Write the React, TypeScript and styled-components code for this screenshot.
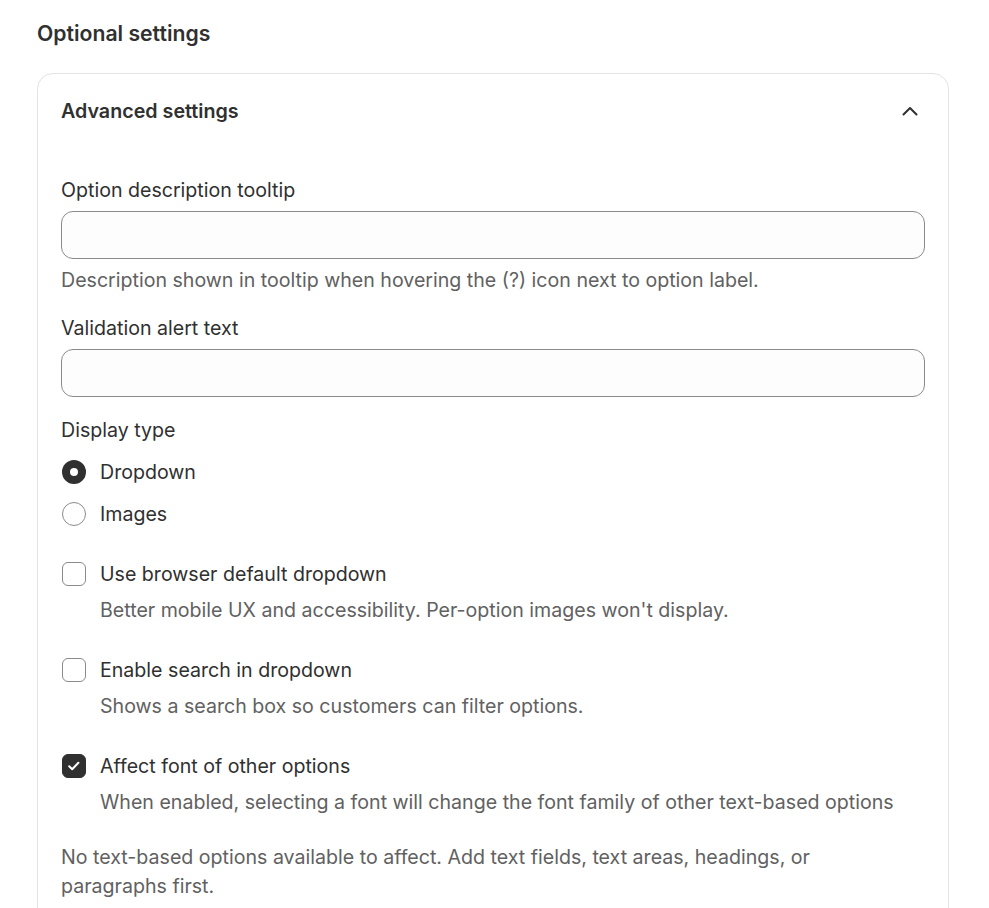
import React from "react";
import styled, { createGlobalStyle } from "styled-components";

const Global = createGlobalStyle`
  * { box-sizing: border-box; }
  html, body { margin: 0; padding: 0; background: #ffffff; }
  body {
    font-family: Inter, "Noto Sans", "Liberation Sans", sans-serif;
    color: #303030;
    -webkit-font-smoothing: antialiased;
  }
`;

const Page = styled.div`
  padding: 19px 40px 0 37px;
`;

const PageTitle = styled.h2`
  margin: 0 0 26px;
  font-size: 21.2px;
  line-height: 28px;
  font-weight: 600;
  color: #303030;
`;

const Card = styled.section`
  border: 1px solid #e3e3e3;
  border-radius: 16px;
  padding: 23px 23px 40px;
  background: #fff;
`;

const CardHeader = styled.div`
  display: flex;
  align-items: center;
  justify-content: space-between;
  height: 28px;
  margin-bottom: 51px;
`;

const CardTitle = styled.h3`
  margin: 0;
  font-size: 19.7px;
  line-height: 28px;
  font-weight: 600;
`;

const ToggleButton = styled.button`
  display: flex;
  align-items: center;
  justify-content: center;
  width: 28px;
  height: 28px;
  margin-right: 1px;
  padding: 0;
  border: 0;
  background: transparent;
  color: #303030;
  cursor: pointer;
`;

const Field = styled.div<{ $gap?: number }>`
  display: flex;
  flex-direction: column;
  gap: 7px;
  margin-bottom: ${(p) => p.$gap ?? 20}px;
`;

const Label = styled.label`
  font-size: 19.6px;
  line-height: 28px;
  color: #303030;
`;

const Input = styled.input`
  display: block;
  width: 100%;
  height: 48px;
  margin: 0;
  padding: 0 14px;
  border: 1px solid #8a8a8a;
  border-radius: 12px;
  background: #fdfdfd;
  font: inherit;
  font-size: 19.6px;
  outline: none;
`;

const Help = styled.div<{ $indent?: boolean }>`
  font-size: 19.6px;
  line-height: 28px;
  color: #616161;
  padding-left: ${(p) => (p.$indent ? 39 : 0)}px;
`;

const ChoiceList = styled.div`
  display: flex;
  flex-direction: column;
  gap: 14px;
  margin-top: 14px;
`;

const Choice = styled.label`
  display: flex;
  align-items: center;
  gap: 14px;
  font-size: 19.6px;
  line-height: 28px;
  color: #303030;
  cursor: pointer;
`;

const RadioDot = styled.span<{ $on?: boolean }>`
  flex: none;
  width: 24px;
  height: 24px;
  margin-left: 1px;
  border-radius: 50%;
  background: #fff;
  border: ${(p) => (p.$on ? "8px solid #303030" : "1px solid #8a8a8a")};
`;

const Box = styled.span<{ $on?: boolean }>`
  flex: none;
  display: flex;
  align-items: center;
  justify-content: center;
  width: 24px;
  height: 24px;
  margin-left: 1px;
  border-radius: 6px;
  background: ${(p) => (p.$on ? "#303030" : "#fff")};
  border: 1px solid ${(p) => (p.$on ? "#303030" : "#8a8a8a")};
`;

const CheckGroup = styled.div`
  display: flex;
  flex-direction: column;
  gap: 8px;
  margin-top: 32px;
`;

const Note = styled.p`
  margin: 27px 0 0;
  max-width: 840px;
  font-size: 19.6px;
  line-height: 29px;
  color: #616161;
`;

const ChevronUp = () => (
  <svg width="16" height="10" viewBox="0 0 16 10" fill="none">
    <path d="M1.5 8.5L8 2l6.5 6.5" stroke="currentColor" strokeWidth="2" strokeLinecap="round" strokeLinejoin="round" />
  </svg>
);

const Tick = () => (
  <svg width="16" height="16" viewBox="0 0 16 16" fill="none">
    <path d="M3.2 8.3l3 3 6.2-6.6" stroke="#fff" strokeWidth="2" strokeLinecap="round" strokeLinejoin="round" />
  </svg>
);

type CheckProps = { label: string; help: string; on?: boolean };

const CheckOption = ({ label, help, on }: CheckProps) => (
  <CheckGroup>
    <Choice>
      <Box $on={on}>{on && <Tick />}</Box>
      {label}
    </Choice>
    <Help $indent>{help}</Help>
  </CheckGroup>
);

export default function App() {
  return (
    <>
      <Global />
      <Page>
        <PageTitle>Optional settings</PageTitle>
        <Card>
          <CardHeader>
            <CardTitle>Advanced settings</CardTitle>
            <ToggleButton aria-label="Collapse">
              <ChevronUp />
            </ToggleButton>
          </CardHeader>

          <Field>
            <Label>Option description tooltip</Label>
            <Input />
            <Help>Description shown in tooltip when hovering the (?) icon next to option label.</Help>
          </Field>

          <Field $gap={19}>
            <Label>Validation alert text</Label>
            <Input />
          </Field>

          <div>
            <Label>Display type</Label>
            <ChoiceList>
              <Choice>
                <RadioDot $on />
                Dropdown
              </Choice>
              <Choice>
                <RadioDot />
                Images
              </Choice>
            </ChoiceList>
          </div>

          <CheckOption
            label="Use browser default dropdown"
            help="Better mobile UX and accessibility. Per-option images won't display."
          />
          <CheckOption
            label="Enable search in dropdown"
            help="Shows a search box so customers can filter options."
          />
          <CheckOption
            on
            label="Affect font of other options"
            help="When enabled, selecting a font will change the font family of other text-based options"
          />

          <Note>
            No text-based options available to affect. Add text fields, text areas, headings, or paragraphs first.
          </Note>
        </Card>
      </Page>
    </>
  );
}
